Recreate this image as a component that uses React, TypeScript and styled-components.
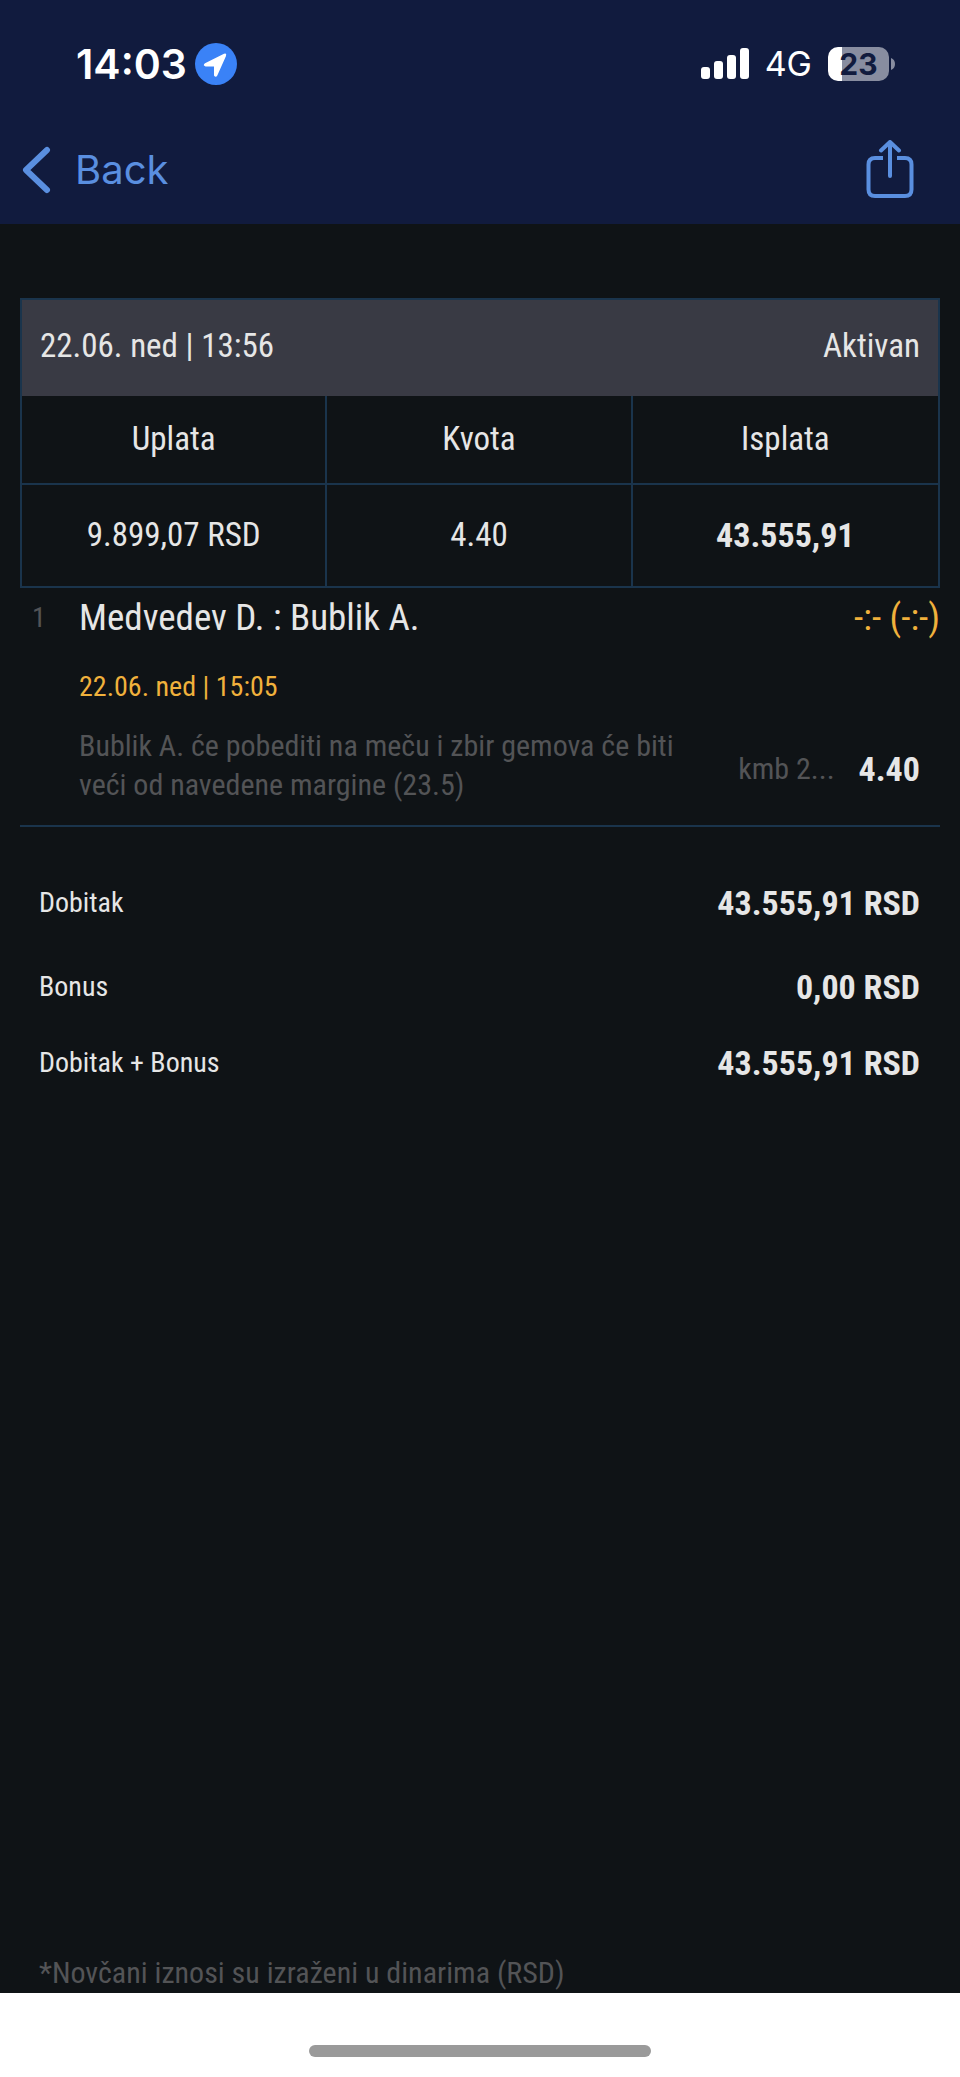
import React from "react";
import styled, { createGlobalStyle } from "styled-components";

const color = {
  navy: "#111b3e",
  link: "#5a8fe0",
  page: "#0f1316",
  band: "#393a44",
  line: "#1a344c",
  text: "#e6e6e6",
  muted: "#535456",
  amber: "#f0b13c",
};

const GlobalStyle = createGlobalStyle`
  * { box-sizing: border-box; }
  body { margin: 0; background: ${color.page}; }
`;

const Screen = styled.div`
  min-height: 100vh;
  display: flex;
  flex-direction: column;
  background: ${color.page};
  color: ${color.text};
  font-family: "Roboto Condensed", "Liberation Sans Narrow", "DejaVu Sans Condensed", sans-serif;
  font-size: 33px;
  line-height: 40px;
`;

const TopArea = styled.header`
  background: ${color.navy};
  font-family: Inter, sans-serif;
`;

const StatusBar = styled.div`
  height: 128px;
  padding: 0 64px 0 76px;
  display: flex;
  align-items: center;
  justify-content: space-between;
  color: #fff;
`;

const StatusGroup = styled.div<{ $gap: number }>`
  display: flex;
  align-items: center;
  gap: ${(p) => p.$gap}px;
`;

const Clock = styled.time`
  font-size: 41px;
  font-weight: 600;
`;

const Network = styled.span`
  font-size: 34px;
`;

const Battery = styled.div`
  display: flex;
  align-items: center;
  gap: 2px;
`;

const BatteryBody = styled.div`
  width: 61px;
  height: 34px;
  border-radius: 10px;
  background: linear-gradient(to right, #fff 23%, #888da0 23%);
  color: ${color.navy};
  font-size: 30px;
  font-weight: 700;
  line-height: 34px;
  text-align: center;
`;

const NavBar = styled.nav`
  height: 96px;
  padding: 0 46px 12px 22px;
  display: flex;
  align-items: center;
  justify-content: space-between;
`;

const NavButton = styled.button`
  display: flex;
  align-items: center;
  gap: 24px;
  padding: 0;
  border: 0;
  background: none;
  color: ${color.link};
  font: 400 40px/48px Inter, sans-serif;
`;

const Ticket = styled.main`
  flex: 1;
  display: flex;
  flex-direction: column;
  padding: 74px 20px 0;
`;

const Summary = styled.section`
  border: 2px solid ${color.line};
`;

const SummaryHead = styled.div`
  display: flex;
  align-items: center;
  justify-content: space-between;
  height: 96px;
  padding: 0 18px 4px;
  background: ${color.band};
`;

const Amounts = styled.table`
  width: 100%;
  table-layout: fixed;
  border-collapse: separate;
  border-spacing: 0;
`;

const HeadCell = styled.th`
  height: 89px;
  padding: 0 0 2px;
  font-weight: 400;
  text-align: center;
  border-bottom: 2px solid ${color.line};
  &:not(:last-child) { border-right: 2px solid ${color.line}; }
`;

const Cell = styled.td<{ $strong?: boolean }>`
  height: 101px;
  padding: 0 0 2px;
  font-size: ${(p) => (p.$strong ? 34 : 33)}px;
  font-weight: ${(p) => (p.$strong ? 700 : 400)};
  text-align: center;
  &:not(:last-child) { border-right: 2px solid ${color.line}; }
`;

const Match = styled.article`
  display: grid;
  grid-template-columns: 59px 1fr auto;
  padding: 8px 0 21px;
  border-bottom: 2px solid ${color.line};
`;

const Ordinal = styled.span`
  padding-left: 12px;
  font-size: 28px;
  line-height: 44px;
  color: ${color.muted};
`;

const Players = styled.h2`
  margin: 0;
  font-size: 37px;
  font-weight: 400;
  line-height: 44px;
`;

const Score = styled.span`
  font-size: 37px;
  line-height: 44px;
  color: ${color.amber};
`;

const Details = styled.div`
  grid-column: 2 / -1;
`;

const Kickoff = styled.time`
  display: block;
  margin: 27px 0 19px;
  font-size: 28px;
  line-height: 40px;
  color: ${color.amber};
`;

const Selection = styled.div`
  display: flex;
  align-items: center;
  padding-right: 20px;
`;

const Description = styled.p`
  flex: 1;
  max-width: 620px;
  margin: 0 auto 0 0;
  font-size: 30px;
  line-height: 39px;
  color: ${color.muted};
`;

const Market = styled.span`
  padding-top: 8px;
  margin-right: 24px;
  font-size: 30px;
  color: ${color.muted};
`;

const Odds = styled.strong`
  padding-top: 8px;
  font-size: 34px;
  font-weight: 700;
`;

const Totals = styled.dl`
  margin: 0;
  padding: 38px 20px 0 19px;
`;

const TotalRow = styled.div`
  display: flex;
  align-items: center;
  justify-content: space-between;
  height: 76px;
  &:first-child { margin-bottom: 8px; }
`;

const TotalLabel = styled.dt`
  font-size: 28px;
`;

const TotalValue = styled.dd`
  margin: 0;
  font-size: 34px;
  font-weight: 700;
`;

const Footnote = styled.p`
  margin: auto 0 0;
  padding: 0 19px;
  font-size: 30px;
  color: ${color.muted};
`;

const HomeArea = styled.footer`
  height: 84px;
  padding-top: 52px;
  background: #fff;
`;

const HomeBar = styled.div`
  width: 342px;
  height: 12px;
  margin: 0 auto;
  border-radius: 6px;
  background: #9a9a9a;
`;

const totals = [
  { label: "Dobitak", value: "43.555,91 RSD" },
  { label: "Bonus", value: "0,00 RSD" },
  { label: "Dobitak + Bonus", value: "43.555,91 RSD" },
];

const LocationIcon = () => (
  <svg width="42" height="42" viewBox="0 0 42 42" aria-hidden="true">
    <circle cx="21" cy="21" r="21" fill="#3a82f7" />
    <path d="M10 20.2 29 10.8Q32 9.8 31 13L22.3 32.6Q20.8 35 19 32.6V23.4H10.6Q7.3 22.4 10 20.2Z" fill="#fff" />
  </svg>
);

const SignalIcon = () => (
  <svg width="48" height="32" viewBox="0 0 48 32" fill="#fff" aria-hidden="true">
    <rect x="0" y="19" width="9" height="12" rx="3" />
    <rect x="13" y="13" width="9" height="18" rx="3" />
    <rect x="26" y="7" width="9" height="24" rx="3" />
    <rect x="39" y="0" width="9" height="31" rx="3" />
  </svg>
);

const BackIcon = () => (
  <svg width="29" height="48" viewBox="0 0 29 48" fill="none" stroke={color.link} strokeWidth="6" strokeLinecap="round" strokeLinejoin="round" aria-hidden="true">
    <path d="M25 4 4 24 25 44" />
  </svg>
);

const ShareIcon = () => (
  <svg width="48" height="60" viewBox="0 0 48 60" fill="none" stroke={color.link} strokeWidth="4" strokeLinecap="round" strokeLinejoin="round" aria-hidden="true">
    <path d="M17 18H9Q2.500 18 2.500 24.500V49.500Q2.500 56 9 56H39Q45.500 56 45.500 49.500V24.500Q45.500 18 39 18H31" strokeLinecap="butt" />
    <path d="M24 36V2M15 10.500 24 2 33 10.500" />
  </svg>
);

export default function App() {
  return (
    <Screen>
      <GlobalStyle />
      <TopArea>
        <StatusBar>
          <StatusGroup $gap={8}>
            <Clock>14:03</Clock>
            <LocationIcon />
          </StatusGroup>
          <StatusGroup $gap={16}>
            <SignalIcon />
            <Network>4G</Network>
            <Battery>
              <BatteryBody>23</BatteryBody>
              <svg width="5" height="12" viewBox="0 0 5 12" aria-hidden="true">
                <path d="M0 0Q4 1.500 4 6T0 12Z" fill="#888da0" />
              </svg>
            </Battery>
          </StatusGroup>
        </StatusBar>
        <NavBar>
          <NavButton type="button">
            <BackIcon />
            Back
          </NavButton>
          <NavButton type="button" aria-label="Share">
            <ShareIcon />
          </NavButton>
        </NavBar>
      </TopArea>

      <Ticket>
        <Summary>
          <SummaryHead>
            <span>22.06. ned | 13:56</span>
            <span>Aktivan</span>
          </SummaryHead>
          <Amounts>
            <thead>
              <tr>
                <HeadCell scope="col">Uplata</HeadCell>
                <HeadCell scope="col">Kvota</HeadCell>
                <HeadCell scope="col">Isplata</HeadCell>
              </tr>
            </thead>
            <tbody>
              <tr>
                <Cell>9.899,07 RSD</Cell>
                <Cell>4.40</Cell>
                <Cell $strong>43.555,91</Cell>
              </tr>
            </tbody>
          </Amounts>
        </Summary>

        <Match>
          <Ordinal>1</Ordinal>
          <Players>Medvedev D. : Bublik A.</Players>
          <Score>-:- (-:-)</Score>
          <Details>
            <Kickoff>22.06. ned | 15:05</Kickoff>
            <Selection>
              <Description>
                Bublik A. će pobediti na meču i zbir gemova će biti veći od navedene margine (23.5)
              </Description>
              <Market>kmb 2...</Market>
              <Odds>4.40</Odds>
            </Selection>
          </Details>
        </Match>

        <Totals>
          {totals.map((t) => (
            <TotalRow key={t.label}>
              <TotalLabel>{t.label}</TotalLabel>
              <TotalValue>{t.value}</TotalValue>
            </TotalRow>
          ))}
        </Totals>

        <Footnote>*Novčani iznosi su izraženi u dinarima (RSD)</Footnote>
      </Ticket>

      <HomeArea>
        <HomeBar />
      </HomeArea>
    </Screen>
  );
}
